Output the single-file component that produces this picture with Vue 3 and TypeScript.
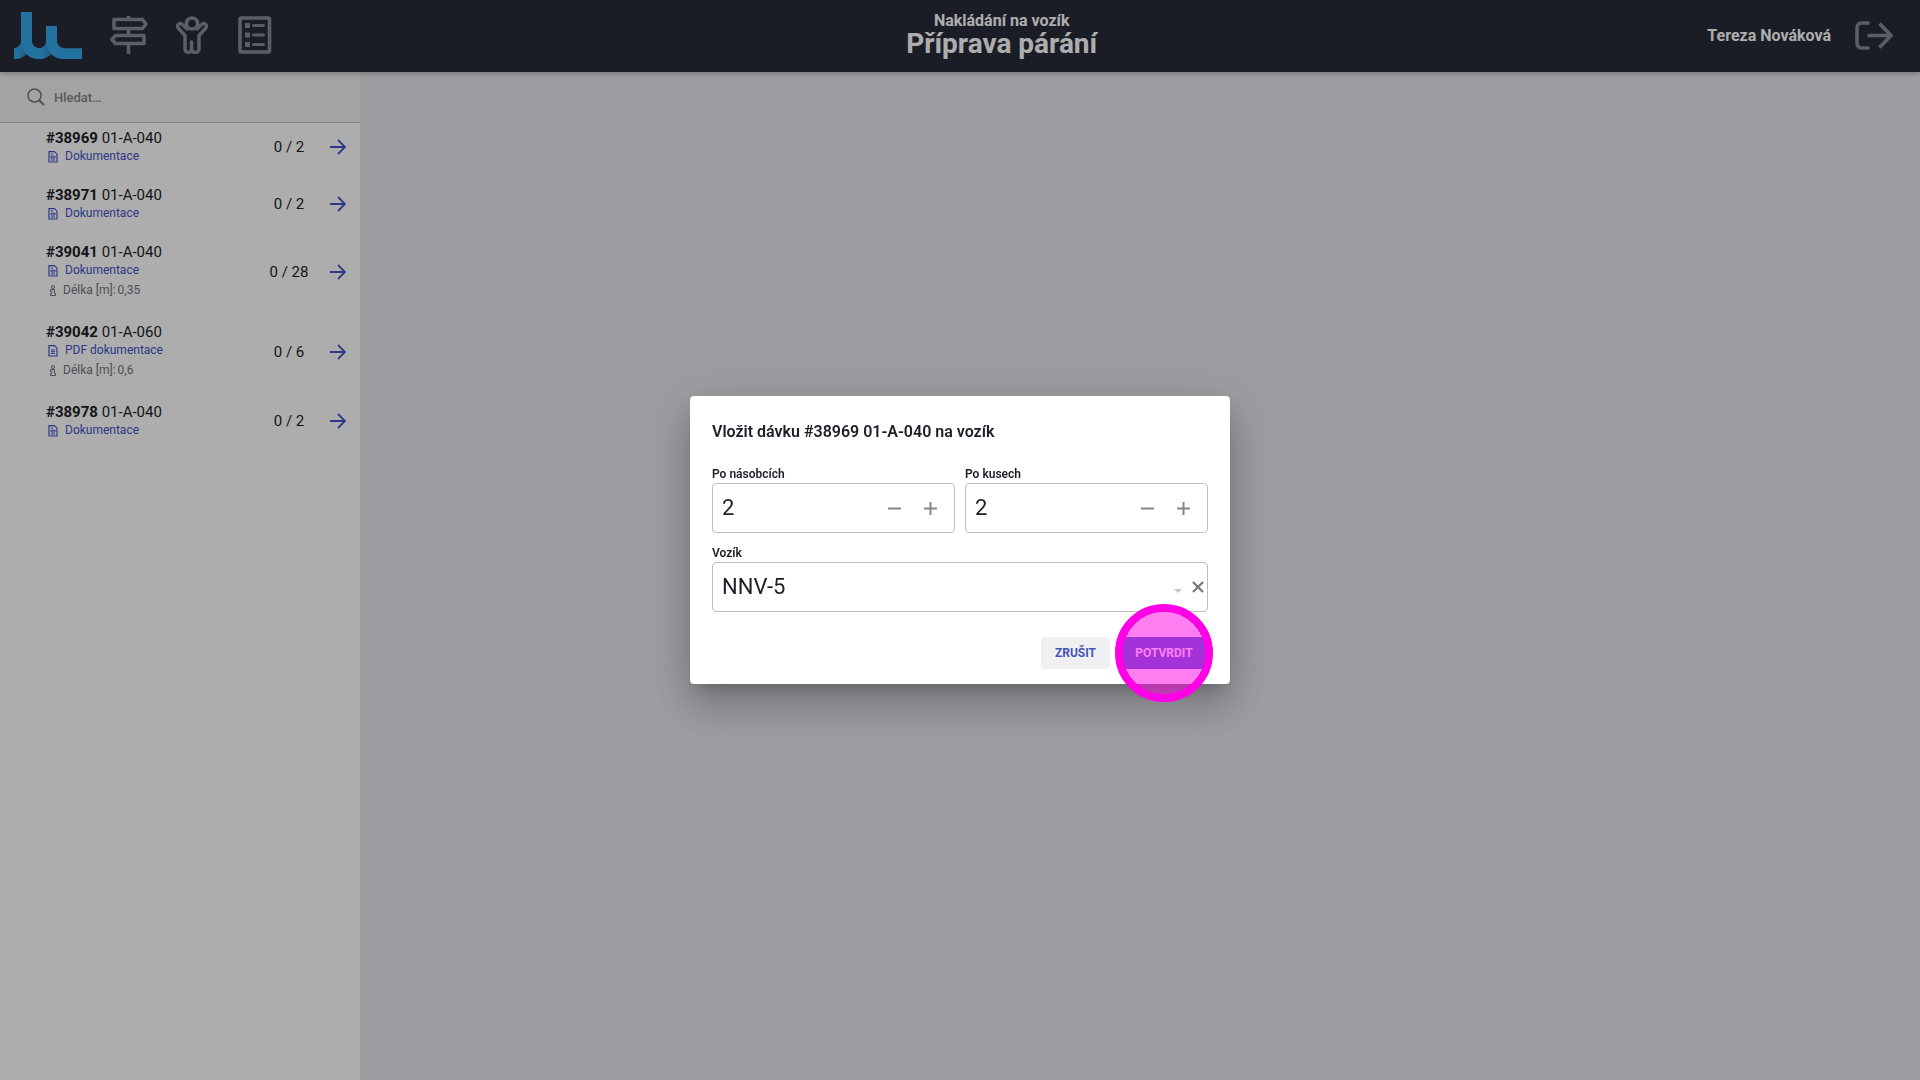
<script setup lang="ts">
import { ref } from 'vue'

interface Batch {
  id: string
  code: string
  doc: string
  pdf?: boolean
  length?: string
  count: string
}

const batches: Batch[] = [
  { id: '#38969', code: '01-A-040', doc: 'Dokumentace', count: '0 / 2' },
  { id: '#38971', code: '01-A-040', doc: 'Dokumentace', count: '0 / 2' },
  { id: '#39041', code: '01-A-040', doc: 'Dokumentace', length: '0,35', count: '0 / 28' },
  { id: '#39042', code: '01-A-060', doc: 'PDF dokumentace', pdf: true, length: '0,6', count: '0 / 6' },
  { id: '#38978', code: '01-A-040', doc: 'Dokumentace', count: '0 / 2' },
]

const search = ref('')
const cart = ref('NNV-5')
const amounts = ref([
  { key: 'multiples', label: 'Po násobcích', value: 2 },
  { key: 'pieces', label: 'Po kusech', value: 2 },
])
</script>

<template>
  <div class="app">
    <header class="topbar">
      <nav class="nav">
        <a href="#" class="logo" aria-label="Domů">
          <svg viewBox="42 36 204 141" width="68" height="47" fill="none" stroke-width="33">
            <defs>
              <linearGradient id="tailA" gradientUnits="userSpaceOnUse" x1="42" y1="0" x2="80" y2="0">
                <stop offset="0.3" stop-color="#36a9eb" />
                <stop offset="1" stop-color="#2c87c0" />
              </linearGradient>
              <linearGradient id="tailB" gradientUnits="userSpaceOnUse" x1="117" y1="0" x2="155" y2="0">
                <stop offset="0.2" stop-color="#36a9eb" />
                <stop offset="1" stop-color="#2c87c0" />
              </linearGradient>
            </defs>
            <path d="M42 161A37.500 37.500 0 0 0 79.500 123.500" stroke="url(#tailA)" />
            <path d="M116 161A37.500 37.500 0 0 0 154.500 123.500" stroke="url(#tailB)" />
            <path d="M79.500 36V123.500A37.500 37.500 0 0 0 117 161M154.500 78V123.500A37.500 37.500 0 0 0 192 161H246" stroke="#36a9eb" />
          </svg>
        </a>
        <button class="nav-btn" aria-label="Navigace">
          <svg viewBox="0 0 38 38" width="38" height="38" fill="none" stroke="#868a99" stroke-width="3.600" stroke-linejoin="round">
            <path d="M4 3.500H32.500L36 8L32.500 12.500H4ZM34 19.500H5.500L2 23.500L5.500 27.500H34ZM18.500 0V3.500M18.500 12.500V19.500M18.500 27.500V38" />
          </svg>
        </button>
        <button class="nav-btn" aria-label="Pracovníci">
          <svg viewBox="0 0 34 38" width="34" height="38" fill="none" stroke="#868a99" stroke-width="3.500" stroke-linejoin="round" stroke-linecap="round">
            <circle cx="16" cy="7.500" r="5.600" />
            <path d="M11 13L6.500 8.500C4 6 0 9 2.500 12.500L9 19.500V33C9 37.500 15.500 37.500 15.500 33V26M15.500 26V33C15.500 37.500 23 37.500 23 33V19.500L29.500 12.500C32 9 28 6 25.500 8.500L21 13" />
          </svg>
        </button>
        <button class="nav-btn" aria-label="Seznam">
          <svg viewBox="0 0 34 38" width="34" height="38" fill="none" stroke="#868a99" stroke-width="3.600">
            <rect x="2" y="2" width="29.500" height="34" rx="1.500" />
            <path d="M15.500 9.500H25.500M15.500 19H25.500M15.500 28.500H25.500" stroke-width="3" stroke-linecap="round" />
            <path d="M7 9.500H12M7 19H12M7 28.500H12" stroke-width="5" />
          </svg>
        </button>
      </nav>
      <div class="heading">
        <p class="subtitle">Nakládání na vozík</p>
        <h1 class="title">Příprava párání</h1>
      </div>
      <div class="user">
        <span>Tereza Nováková</span>
        <button class="nav-btn" aria-label="Odhlásit">
          <svg viewBox="0 0 38 29" width="38" height="29" fill="none" stroke="#868a99" stroke-width="3.600">
            <path d="M14.500 2H7Q2 2 2 7V21.500Q2 27 7 27H14.500M12.500 14.500H35" />
            <path d="M24.500 2.500L36 14.500L24.500 26.500" stroke-linejoin="round" />
          </svg>
        </button>
      </div>
    </header>

    <div class="body">
      <aside class="sidebar">
        <label class="search">
          <svg viewBox="0 0 18 18" width="18" height="18" fill="none" stroke="#75757a" stroke-width="1.500">
            <circle cx="7.500" cy="7.500" r="6.500" />
            <path d="M12 12L17 17" stroke-width="2" />
          </svg>
          <input v-model="search" type="text" placeholder="Hledat…" aria-label="Hledat" />
        </label>
        <ul class="list">
          <li v-for="b in batches" :key="b.id" class="item">
            <div class="info">
              <div class="name"><b>{{ b.id }}</b> {{ b.code }}</div>
              <a href="#" class="doc">
                <svg viewBox="0 0 10 12" width="10" height="12" fill="none" stroke="currentColor">
                  <path d="M1 .7H6.500L9 3.200V11H1Z" stroke-width="1.200" />
                  <path v-if="b.pdf" d="M3 5H7M3 6.700H7M3 8.400H7" />
                  <path v-else d="M3 3H5M3 5.200H7V7H3ZM3 9H7" />
                </svg>
                {{ b.doc }}
              </a>
              <div v-if="b.length" class="length">
                <svg viewBox="0 0 6 11" width="6" height="11" fill="none" stroke="currentColor" stroke-width="1">
                  <circle cx="3" cy="2" r="1.500" />
                  <path d="M.5 4.500H4.500V8.500H5.500V10.500H.5V8.500H1.500V6.500H.5Z" />
                </svg>
                <span>Délka [m]:</span><span>{{ b.length }}</span>
              </div>
            </div>
            <span class="count">{{ b.count }}</span>
            <button class="go" :aria-label="'Vložit ' + b.id">
              <svg viewBox="0 0 16 16" width="16" height="16" fill="none" stroke="currentColor" stroke-width="1.800">
                <path d="M0 8H15M8 1L15 8L8 15" />
              </svg>
            </button>
          </li>
        </ul>
      </aside>
      <main class="content"></main>
    </div>

    <div class="overlay">
      <form class="dialog" role="dialog" aria-labelledby="dialog-title" @submit.prevent>
        <h2 id="dialog-title">Vložit dávku #38969 01-A-040 na vozík</h2>
        <div class="row">
          <div v-for="a in amounts" :key="a.key" class="field">
            <label :for="a.key">{{ a.label }}</label>
            <div class="box">
              <input :id="a.key" v-model.number="a.value" type="text" inputmode="numeric" />
              <button type="button" class="step" aria-label="Ubrat" @click="a.value--">
                <svg viewBox="0 0 13 13" width="13" height="13" stroke="currentColor" stroke-width="2"><path d="M0 6.500H13" /></svg>
              </button>
              <button type="button" class="step" aria-label="Přidat" @click="a.value++">
                <svg viewBox="0 0 13 13" width="13" height="13" stroke="currentColor" stroke-width="2"><path d="M0 6.500H13M6.500 0V13" /></svg>
              </button>
            </div>
          </div>
        </div>
        <div class="field cart">
          <label for="cart">Vozík</label>
          <div class="box select-box">
            <select id="cart" v-model="cart">
              <option>NNV-5</option>
            </select>
            <svg class="caret" viewBox="0 0 8 4" width="8" height="4"><path d="M0 0H8L4 4Z" fill="#c4c4c6" /></svg>
            <button type="button" class="clear" aria-label="Vymazat" @click="cart = ''">
              <svg viewBox="0 0 12 12" width="12" height="12" stroke="currentColor" stroke-width="2.200"><path d="M1 1L11 11M11 1L1 11" /></svg>
            </button>
          </div>
        </div>
        <div class="actions">
          <button type="button" class="btn">ZRUŠIT</button>
          <div class="primary-wrap">
            <button type="submit" class="btn primary">POTVRDIT</button>
            <span class="marker"></span>
          </div>
        </div>
      </form>
    </div>
  </div>
</template>

<style>
body {
  margin: 0;
}
</style>

<style scoped>
.app {
  min-height: 100vh;
  display: flex;
  flex-direction: column;
  font-family: Roboto, 'Liberation Sans', sans-serif;
  color: #1c1e28;
}
.app * {
  box-sizing: border-box;
}
button,
input,
select {
  font: inherit;
  color: inherit;
  background: none;
  border: 0;
  padding: 0;
  outline: 0;
}
svg {
  display: block;
  flex: none;
}
.topbar {
  position: relative;
  height: 72px;
  display: flex;
  justify-content: space-between;
  align-items: center;
  padding: 0 27px 2px 14px;
  background: #282c38;
  color: #fff;
  box-shadow: 0 0 6px rgba(0, 0, 0, 0.4);
}
.nav {
  display: flex;
  align-items: center;
  gap: 28px;
  padding-right: 24px;
}
.heading {
  text-align: center;
}
.subtitle {
  margin: 0;
  font-size: 16px;
  font-weight: 700;
  line-height: 18px;
}
.title {
  margin: 0;
  font-size: 28px;
  font-weight: 700;
  line-height: 28px;
}
.user {
  display: flex;
  justify-content: flex-end;
  align-items: center;
  gap: 24px;
  font-size: 16px;
  font-weight: 700;
}
.body {
  flex: 1;
  display: flex;
}
.sidebar {
  width: 360px;
  background: #fff;
}
.content {
  flex: 1;
  background: #e7e7ee;
}
.search {
  height: 51px;
  display: flex;
  align-items: center;
  gap: 9px;
  padding-left: 27px;
  background: #f1f1f1;
  border-bottom: 1px solid #c8c8c8;
}
.search input {
  flex: 1;
  font-size: 13px;
  font-weight: 500;
}
.search input::placeholder {
  color: #85858a;
  opacity: 1;
}
.list {
  list-style: none;
  margin: 0;
  padding: 5px 14px 0 46px;
  display: flex;
  flex-direction: column;
  gap: 20px;
}
.item {
  display: flex;
  align-items: center;
}
.info {
  flex: 1;
}
.name {
  font-size: 15px;
  line-height: 20px;
}
.doc {
  display: flex;
  align-items: center;
  gap: 7px;
  padding-left: 2px;
  font-size: 12px;
  line-height: 17px;
  color: #4355c8;
  text-decoration: none;
}
.length {
  display: flex;
  align-items: center;
  padding-left: 4px;
  font-size: 12px;
  line-height: 23px;
  color: #75757e;
}
.length svg {
  margin-right: 7px;
}
.length span + span {
  margin-left: 2px;
}
.count {
  width: 60px;
  text-align: center;
  font-size: 15px;
}
.go {
  margin-left: 11px;
  color: #4355c8;
}
.overlay {
  position: fixed;
  inset: 0;
  display: flex;
  align-items: center;
  justify-content: center;
  background: rgba(0, 0, 0, 0.32);
}
.dialog {
  width: 540px;
  padding: 24px 22px 15px;
  background: #fff;
  border-radius: 4px;
  box-shadow: 0 11px 15px -7px rgba(0, 0, 0, 0.2), 0 24px 38px 3px rgba(0, 0, 0, 0.14),
    0 9px 46px 8px rgba(0, 0, 0, 0.12);
}
.dialog h2 {
  margin: 0 0 22px;
  font-size: 16px;
  font-weight: 600;
  line-height: 24px;
}
.row {
  display: flex;
  gap: 10px;
}
.field {
  flex: 1;
  min-width: 0;
}
.field label {
  display: block;
  font-size: 12px;
  font-weight: 600;
  line-height: 17px;
}
.box {
  height: 50px;
  display: flex;
  align-items: center;
  padding: 0 6px 0 9px;
  border: 1px solid #bdbdc0;
  border-radius: 4px;
}
.box input,
.box select {
  flex: 1;
  min-width: 0;
  height: 48px;
  padding-bottom: 2px;
  font-size: 22px;
}
.box select {
  appearance: none;
}
.step {
  width: 36px;
  height: 36px;
  display: grid;
  place-items: center;
  color: #85858c;
}
.cart {
  margin-top: 12px;
}
.select-box {
  padding-right: 3px;
}
.caret {
  margin: 8px 10px 0 0;
}
.clear {
  color: #75757c;
}
.actions {
  margin-top: 25px;
  display: flex;
  justify-content: flex-end;
  gap: 10px;
}
.btn {
  height: 32px;
  padding: 0 14px;
  border-radius: 4px;
  background: #f0f0f2;
  color: #4355b9;
  font-size: 12px;
  font-weight: 700;
}
.primary-wrap {
  position: relative;
}
.primary {
  min-width: 88px;
  background: #4764cc;
  color: #fff;
}
.marker {
  position: absolute;
  top: 50%;
  left: 50%;
  width: 98px;
  height: 98px;
  margin: -49px;
  border: 8px solid #ff00e6;
  border-radius: 50%;
  background: rgba(255, 0, 230, 0.5);
  background-clip: padding-box;
  pointer-events: none;
}
</style>
